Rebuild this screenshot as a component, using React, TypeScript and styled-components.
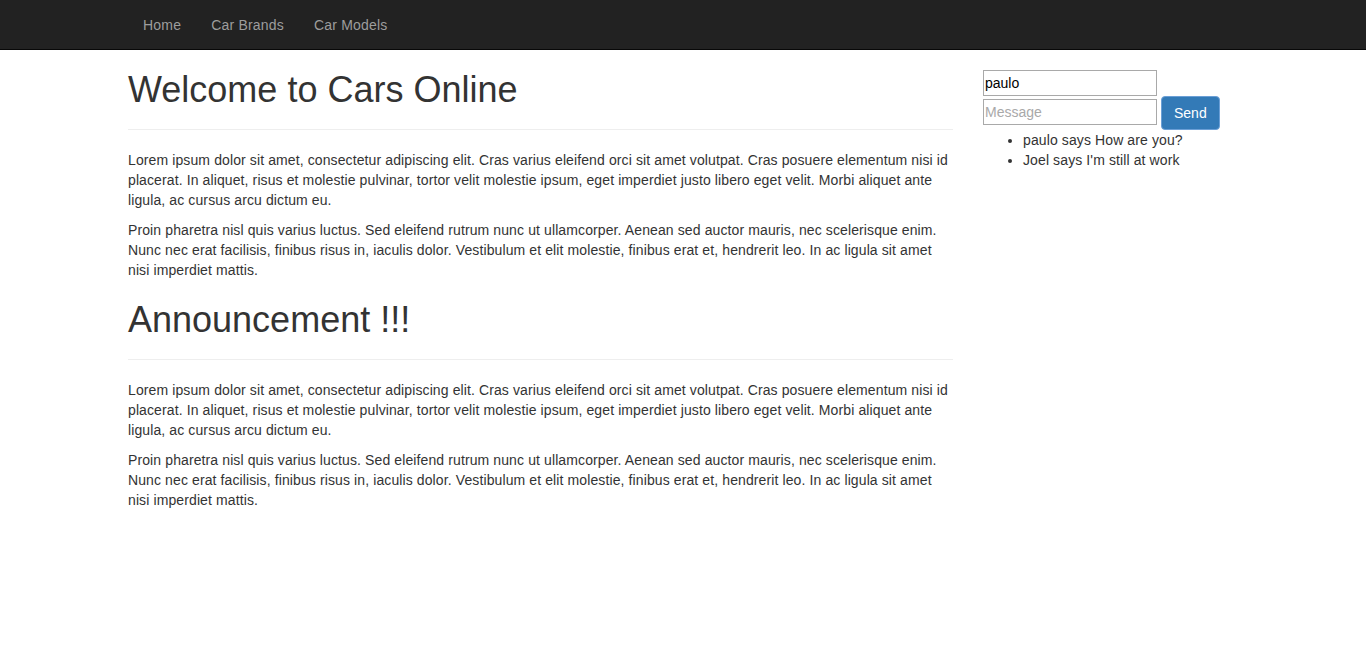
import React from "react";
import styled, { createGlobalStyle } from "styled-components";

const Global = createGlobalStyle`
  html, body { margin: 0; padding: 0; background: #fff; }
  body {
    font-family: "Liberation Sans", Arial, Helvetica, sans-serif;
    font-size: 14px;
    line-height: 1.42857143;
    letter-spacing: 0.11px;
    color: #333;
  }
  * { box-sizing: border-box; }
`;

const Navbar = styled.nav`
  height: 50px;
  background: #222;
  border-bottom: 1px solid #080808;
`;

const Container = styled.div`
  width: 1170px;
  margin: 0 auto;
  padding: 0 15px;
  display: flex;
`;

const NavList = styled.ul`
  display: flex;
  list-style: none;
  margin: 0 0 0 15px;
  padding: 0;
`;

const NavLink = styled.a`
  display: block;
  padding: 15px 15px 14px;
  line-height: 20px;
  color: #9d9d9d;
  text-decoration: none;
  letter-spacing: 0.2px;
`;

const MainCol = styled.main`
  width: 75%;
  padding: 0 15px;
`;

const SideCol = styled.aside`
  width: 25%;
  padding: 20px 15px 0;
`;

const Heading = styled.h1`
  font-size: 36px;
  font-weight: 500;
  line-height: 39px;
  letter-spacing: 0;
  margin: 20px 0 10px;
  color: #333;
`;

const Rule = styled.hr`
  margin: 20px 0;
  border: 0;
  border-top: 1px solid #eee;
  height: 0;
`;

const Para = styled.p`
  margin: 0 0 10px;
`;

const Field = styled.input`
  display: block;
  width: 174px;
  height: 26px;
  padding: 1px 1px;
  border: 1px solid #a9a9a9;
  font-family: "Liberation Sans", Arial, sans-serif;
  font-size: 14px;
  color: #000;
  background: #fff;
  &::placeholder { color: #a9a9a9; }
`;

const SendRow = styled.div`
  display: flex;
  align-items: flex-start;
  gap: 4px;
`;

const MessageField = styled(Field)`
  margin-top: 3px;
`;

const SendButton = styled.button`
  height: 34px;
  padding: 6px 12px;
  font-family: "Liberation Sans", Arial, sans-serif;
  font-size: 14px;
  line-height: 20px;
  color: #fff;
  background: #337ab7;
  border: 1px solid #6b9fd6;
  border-radius: 4px;
`;

const Messages = styled.ul`
  margin: 0 0 10px;
  padding-left: 40px;
`;

const lorem1 =
  "Lorem ipsum dolor sit amet, consectetur adipiscing elit. Cras varius eleifend orci sit amet volutpat. Cras posuere elementum nisi id placerat. In aliquet, risus et molestie pulvinar, tortor velit molestie ipsum, eget imperdiet justo libero eget velit. Morbi aliquet ante ligula, ac cursus arcu dictum eu.";
const lorem2 =
  "Proin pharetra nisl quis varius luctus. Sed eleifend rutrum nunc ut ullamcorper. Aenean sed auctor mauris, nec scelerisque enim. Nunc nec erat facilisis, finibus risus in, iaculis dolor. Vestibulum et elit molestie, finibus erat et, hendrerit leo. In ac ligula sit amet nisi imperdiet mattis.";

export default function App() {
  return (
    <>
      <Global />
      <Navbar>
        <Container>
          <NavList>
            <li><NavLink href="#">Home</NavLink></li>
            <li><NavLink href="#">Car Brands</NavLink></li>
            <li><NavLink href="#">Car Models</NavLink></li>
          </NavList>
        </Container>
      </Navbar>
      <Container>
        <MainCol>
          <Heading>Welcome to Cars Online</Heading>
          <Rule />
          <Para>{lorem1}</Para>
          <Para>{lorem2}</Para>
          <Heading>Announcement !!!</Heading>
          <Rule />
          <Para>{lorem1}</Para>
          <Para>{lorem2}</Para>
        </MainCol>
        <SideCol>
          <Field defaultValue="paulo" />
          <SendRow>
            <MessageField placeholder="Message" />
            <SendButton>Send</SendButton>
          </SendRow>
          <Messages>
            <li>paulo says How are you?</li>
            <li>Joel says I'm still at work</li>
          </Messages>
        </SideCol>
      </Container>
    </>
  );
}
